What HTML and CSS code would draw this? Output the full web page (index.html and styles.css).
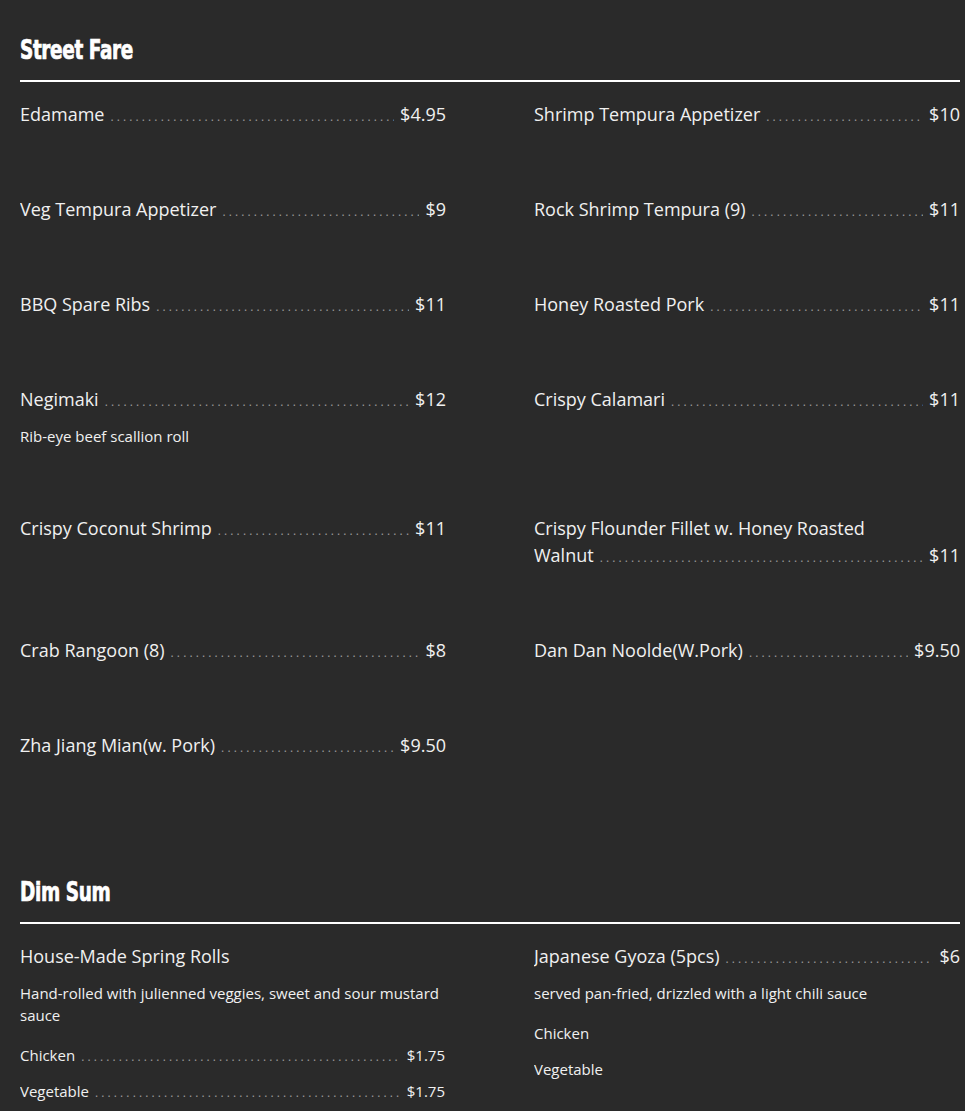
FILE: index.html
```html
<!DOCTYPE html>
<html lang="en">
<head>
    <meta charset="UTF-8">
    <meta name="viewport" content="width=device-width, initial-scale=1.0">
    <title>Menu</title>
    <link rel="stylesheet" href="styles.css">
</head>
<body>
    <div class="menu">
        <!-- Street Fare -->
        <section class="menu-section">
            <h2 class="section-title"><span class="title-text">Street Fare</span></h2>
            <div class="menu-grid">
                <div class="item">
                    <div class="item-line"><span class="item-name">Edamame<span class="dots"></span></span><span class="item-price">$4.95</span></div>
                </div>
                <div class="item">
                    <div class="item-line"><span class="item-name">Shrimp Tempura Appetizer<span class="dots"></span></span><span class="item-price">$10</span></div>
                </div>

                <div class="item">
                    <div class="item-line"><span class="item-name">Veg Tempura Appetizer<span class="dots"></span></span><span class="item-price">$9</span></div>
                </div>
                <div class="item">
                    <div class="item-line"><span class="item-name">Rock Shrimp Tempura (9)<span class="dots"></span></span><span class="item-price">$11</span></div>
                </div>

                <div class="item">
                    <div class="item-line"><span class="item-name">BBQ Spare Ribs<span class="dots"></span></span><span class="item-price">$11</span></div>
                </div>
                <div class="item">
                    <div class="item-line"><span class="item-name">Honey Roasted Pork<span class="dots"></span></span><span class="item-price">$11</span></div>
                </div>

                <div class="item">
                    <div class="item-line"><span class="item-name">Negimaki<span class="dots"></span></span><span class="item-price">$12</span></div>
                    <p class="item-desc">Rib-eye beef scallion roll</p>
                </div>
                <div class="item">
                    <div class="item-line"><span class="item-name">Crispy Calamari<span class="dots"></span></span><span class="item-price">$11</span></div>
                </div>

                <div class="item">
                    <div class="item-line"><span class="item-name">Crispy Coconut Shrimp<span class="dots"></span></span><span class="item-price">$11</span></div>
                </div>
                <div class="item">
                    <div class="item-line"><span class="item-name">Crispy Flounder Fillet w. Honey Roasted Walnut<span class="dots"></span></span><span class="item-price">$11</span></div>
                </div>

                <div class="item">
                    <div class="item-line"><span class="item-name">Crab Rangoon (8)<span class="dots"></span></span><span class="item-price">$8</span></div>
                </div>
                <div class="item">
                    <div class="item-line"><span class="item-name">Dan Dan Noolde(W.Pork)<span class="dots"></span></span><span class="item-price">$9.50</span></div>
                </div>

                <div class="item">
                    <div class="item-line"><span class="item-name">Zha Jiang Mian(w. Pork)<span class="dots"></span></span><span class="item-price">$9.50</span></div>
                </div>
            </div>
        </section>

        <!-- Dim Sum -->
        <section class="menu-section">
            <h2 class="section-title"><span class="title-text">Dim Sum</span></h2>
            <div class="menu-grid">
                <div class="item">
                    <div class="item-line"><span class="item-name">House-Made Spring Rolls</span></div>
                    <p class="item-desc">Hand-rolled with julienned veggies, sweet and sour mustard sauce</p>
                    <div class="options">
                        <div class="option-line"><span class="item-name">Chicken<span class="dots"></span></span><span class="item-price">$1.75</span></div>
                        <div class="option-line"><span class="item-name">Vegetable<span class="dots"></span></span><span class="item-price">$1.75</span></div>
                    </div>
                </div>
                <div class="item">
                    <div class="item-line"><span class="item-name">Japanese Gyoza (5pcs)<span class="dots"></span></span><span class="item-price">$6</span></div>
                    <p class="item-desc">served pan-fried, drizzled with a light chili sauce</p>
                    <div class="options">
                        <div class="option-line"><span class="item-name">Chicken</span></div>
                        <div class="option-line"><span class="item-name">Vegetable</span></div>
                    </div>
                </div>
            </div>
        </section>
    </div>
</body>
</html>
```

FILE: styles.css
```css
body {
    margin: 0;
    background-color: #2a2a2a;
    color: #f0f0f0;
    font-family: "Open Sans", "Liberation Sans", sans-serif;
}

.menu {
    width: 940px;
    margin-left: 20px;
}

.menu-section {
    padding: 33px 0 83px;
}

.menu-section:last-child {
    padding-bottom: 40px;
}

.section-title {
    margin: 0;
    padding-bottom: 13px;
    border-bottom: 2px solid #ffffff;
    font-family: Impact, "DejaVu Sans", sans-serif;
    font-size: 27px;
    font-weight: 900;
    font-stretch: condensed;
    line-height: 34px;
    color: #ffffff;
}

/* no Impact here, so squeeze the heavy face sideways */
.title-text {
    display: inline-block;
    transform: scaleX(0.76);
    transform-origin: left center;
    letter-spacing: -0.5px;
    -webkit-text-stroke: 0.7px #ffffff;
}

.menu-grid {
    display: grid;
    grid-template-columns: 1fr 1fr;
    column-gap: 88px;
    row-gap: 68px;
    margin-top: 19px;
}

.item-line,
.option-line {
    display: flex;
    align-items: flex-end;
}

.item-line {
    font-size: 18px;
    line-height: 27px;
}

.option-line {
    font-size: 15px;
    line-height: 22px;
}

.option-line + .option-line {
    margin-top: 14px;
}

.item-name {
    flex: 1;
    min-width: 0;
    overflow: hidden;
}

/* Dot leaders after the last line of the name */
.dots {
    display: inline-block;
    width: 0;
    padding-left: 6px;
    white-space: nowrap;
    font-size: 12px;
    line-height: 1;
    color: #9a9a9a;
}

.dots::after {
    content: ". . . . . . . . . . . . . . . . . . . . . . . . . . . . . . . . . . . . . . . . . . . . . . . . . . . . . . . . . . . . . . . . . . . . . . . . . . . . . . . . . . . . . . . . . . . . . . . . . . . . . . . . . . . . . . .";
}

.item-price {
    flex: none;
    padding-left: 6px;
}

.option-line .item-price {
    margin-right: 1px;
}

.item-desc {
    margin: 12px 0 0;
    font-size: 15px;
    line-height: 22px;
}

.options {
    margin-top: 18px;
}
```
